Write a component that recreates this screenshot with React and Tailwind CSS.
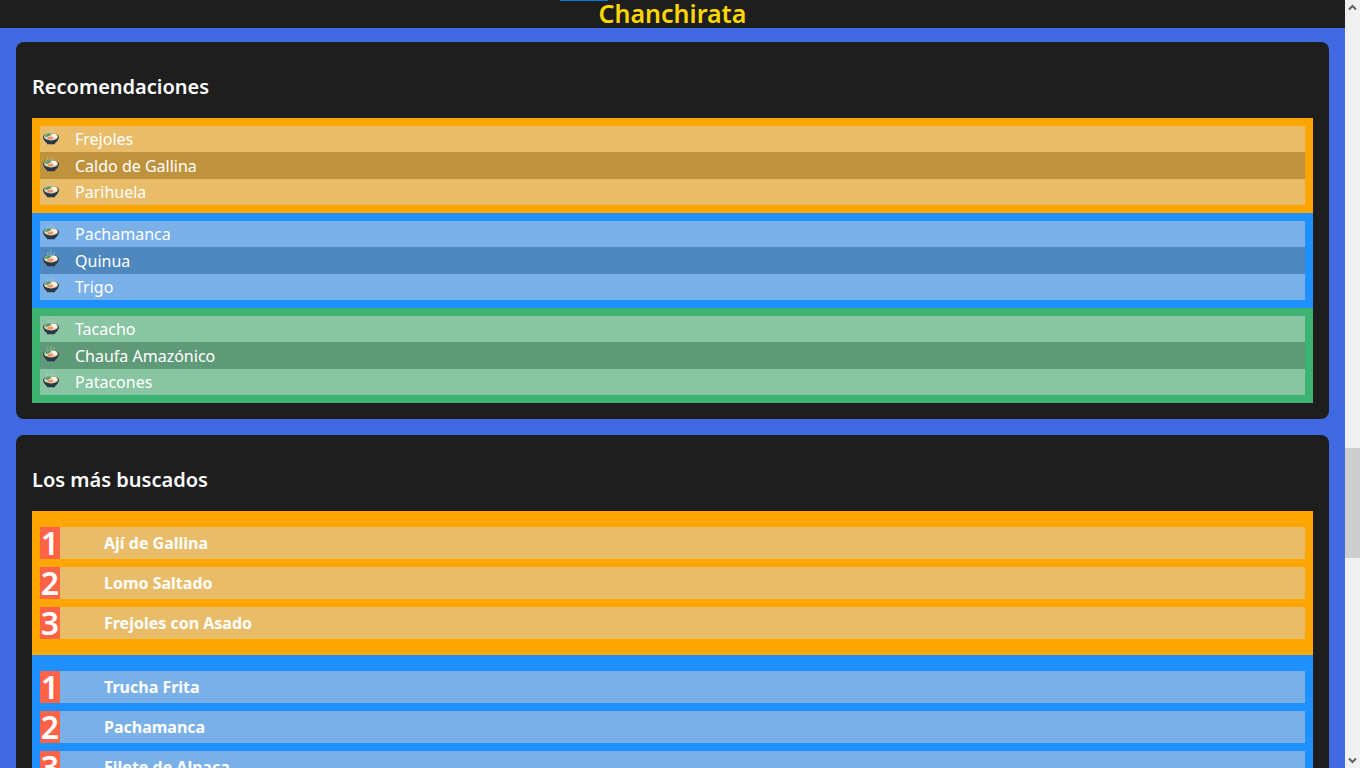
import React from 'react';

const regions = [
  {
    name: 'Costa',
    panel: 'bg-[#ffa500]',
    stripes: 'odd:bg-[#e8bc69] even:bg-[#bf923e]',
    ranked: 'bg-[#e8bc69]',
    suggestions: ['Frejoles', 'Caldo de Gallina', 'Parihuela'],
    top: ['Ají de Gallina', 'Lomo Saltado', 'Frejoles con Asado'],
  },
  {
    name: 'Sierra',
    panel: 'bg-[#1e90ff]',
    stripes: 'odd:bg-[#79b0e8] even:bg-[#4f88bf]',
    ranked: 'bg-[#79b0e8]',
    suggestions: ['Pachamanca', 'Quinua', 'Trigo'],
    top: ['Trucha Frita', 'Pachamanca', 'Filete de Alpaca'],
  },
  {
    name: 'Selva',
    panel: 'bg-[#3cb371]',
    stripes: 'odd:bg-[#89c4a3] even:bg-[#5f9a78]',
    ranked: 'bg-[#89c4a3]',
    suggestions: ['Tacacho', 'Chaufa Amazónico', 'Patacones'],
    top: [],
  },
];

function Bowl() {
  return (
    <svg viewBox="0 0 16 16" className="h-4 w-4" aria-hidden="true">
      <g fill="none" stroke="#d9dde0" strokeOpacity="0.6" strokeWidth="0.7">
        <path d="M5 4.6C3.8 3.4 5.6 2.5 4.7 1.2M8 4C7 2.6 8.8 1.6 7.9 .1M11 4.6C10 3.4 11.8 2.5 10.9 1.2" />
      </g>
      <path d="M0 7.8C.6 11 2 13 4 14.2V15.2h8v-1C14 13 15.4 11 16 7.8z" fill="#293846" />
      <ellipse cx="8" cy="7.9" rx="8" ry="3.7" fill="#344654" />
      <ellipse cx="8" cy="7.8" rx="6.9" ry="3.6" fill="#efd9b3" />
      <path d="M1.9 7.4C3 5.2 5.2 4.2 8.4 4.4L7.4 6.4 3.6 8z" fill="#35a567" />
      <ellipse cx="11" cy="7" rx="2.8" ry="2.2" fill="#fff3e5" />
      <path d="M4 9.3l2.2-2 1.2 1.3 1.4-1.7 1.8 2.2-1.8 1.4-3.4.1z" fill="#e8906f" />
      <path d="M6.6 6.4l1.8-.7 1 1-1.4 1z" fill="#f6c7a2" />
    </svg>
  );
}

function Card({ title, children }) {
  return (
    <section className="rounded-lg bg-[#1e1e1e] px-4 pb-4">
      <h2 className="pt-[31px] pb-[17px] text-xl leading-7 font-semibold">{title}</h2>
      {children}
    </section>
  );
}

function Suggestions({ region }) {
  return (
    <ul className={`p-2 ${region.panel}`} aria-label={region.name}>
      {region.suggestions.map((dish) => (
        <li
          key={dish}
          className={`flex items-center gap-4 pl-[3px] text-base odd:h-[26px] even:h-[27px] ${region.stripes}`}
        >
          <span className="shrink-0 pb-1"><Bowl /></span>
          <span>{dish}</span>
        </li>
      ))}
    </ul>
  );
}

function Ranking({ region }) {
  return (
    <ol className={`flex flex-col gap-2 px-2 py-4 ${region.panel}`} aria-label={region.name}>
      {region.top.map((dish, index) => (
        <li key={dish} className={`flex h-8 items-center gap-11 ${region.ranked}`}>
          <span className="flex h-8 w-5 items-center justify-center bg-[#ff6347] text-[32px] leading-8 font-semibold">
            {index + 1}
          </span>
          <span className="text-base font-bold">{dish}</span>
        </li>
      ))}
    </ol>
  );
}

function ScrollRail() {
  return (
    <div className="flex w-[15px] shrink-0 flex-col bg-[#f0f0f0] text-[#606060]" aria-hidden="true">
      <svg viewBox="0 0 15 15" className="h-[15px] w-[15px]">
        <path d="M4 9.5l3.5-3.5L11 9.5" fill="none" stroke="currentColor" strokeWidth="2" />
      </svg>
      <div className="grow-[433]" />
      <div className="grow-[110] bg-[#cdcdcd]" />
      <div className="grow-[195]" />
      <svg viewBox="0 0 15 15" className="h-[15px] w-[15px]">
        <path d="M4 5.5L7.5 9 11 5.5" fill="none" stroke="currentColor" strokeWidth="2" />
      </svg>
    </div>
  );
}

export default function App() {
  return (
    <div className="flex h-screen bg-[#4169e1] font-['Noto_Sans',sans-serif] text-white">
      <div className="flex min-w-0 flex-1 flex-col">
        <header className="relative shrink-0 bg-[#1e1e1e] pb-[2px] text-center">
          <span className="absolute top-0 left-[560px] h-px w-12 bg-[#0078d7]" />
          <h1 className="text-[25px] leading-[26px] font-semibold text-[#ffd700]">Chanchirata</h1>
        </header>
        <main className="flex min-h-0 flex-1 flex-col gap-4 overflow-y-auto px-4 pt-[14px] [scrollbar-width:none]">
          <Card title="Recomendaciones">
            {regions.map((region) => (
              <Suggestions key={region.name} region={region} />
            ))}
          </Card>
          <Card title="Los más buscados">
            {regions.filter((region) => region.top.length > 0).map((region) => (
              <Ranking key={region.name} region={region} />
            ))}
          </Card>
        </main>
      </div>
      <ScrollRail />
    </div>
  );
}
